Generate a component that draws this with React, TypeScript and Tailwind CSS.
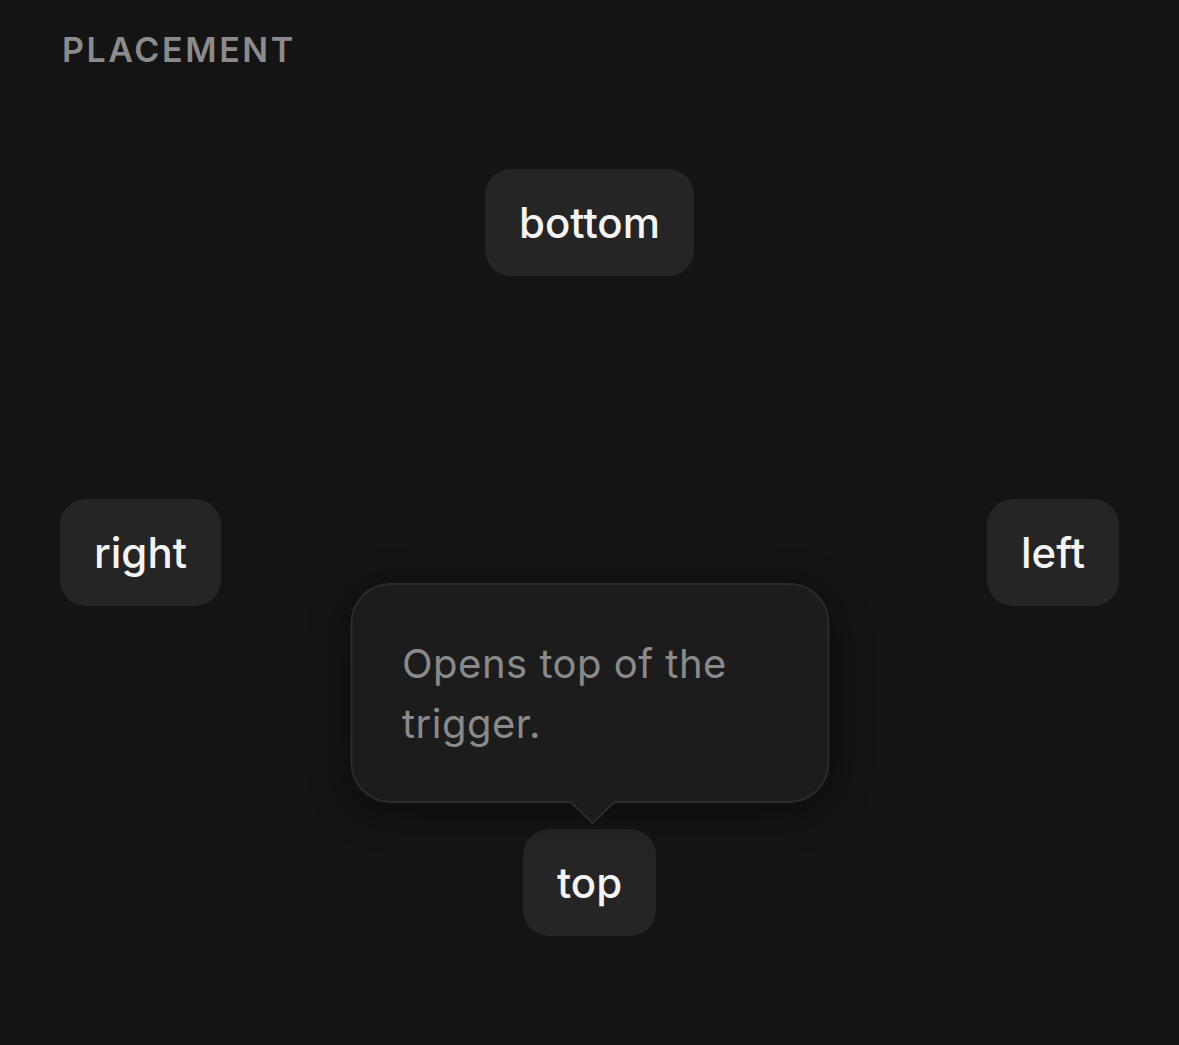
import type { ReactNode } from "react";

const Trigger = ({ children }: { children: ReactNode }) => (
  <button className="h-[107px] rounded-[26px] bg-[#252525] px-[34px] text-[42px] font-medium leading-none text-[#f4f4f4] tracking-[0px]">
    {children}
  </button>
);

export default function App() {
  return (
    <div
      className="min-h-[1045px] bg-[#141414] px-[60px] pt-[29px]"
      style={{ fontFamily: "Inter, 'Noto Sans', sans-serif" }}
    >
      <h2 className="pl-[2px] text-[34px] font-semibold leading-[42px] tracking-[2.6px] text-[#8b8b8b]">
        PLACEMENT
      </h2>

      <div className="mt-[98px] flex justify-center">
        <Trigger>bottom</Trigger>
      </div>

      <div className="mt-[223px] flex items-center justify-between">
        <Trigger>right</Trigger>
        <Trigger>left</Trigger>
      </div>

      <div className="mt-[223px] flex justify-center">
        <div className="relative">
          {/* tooltip above the trigger */}
          <div className="absolute bottom-[133px] left-1/2 w-[479px] -translate-x-1/2">
            <div className="relative rounded-[40px] border-2 border-[#2b2b2b] bg-[#1c1c1c] px-[50px] pt-[49px] pb-[47px] shadow-[0_8px_40px_rgba(0,0,0,0.45)]">
              <p className="text-[40px] leading-[60px] tracking-[0.5px] text-[#8a8a8a]">
                Opens top of the trigger.
              </p>
              <svg
                className="absolute -bottom-[24px] left-[217px]"
                width="46"
                height="25"
                viewBox="0 0 46 25"
              >
                <path d="M0 1 L23 23 L46 1" fill="#1c1c1c" stroke="#2b2b2b" strokeWidth="2" />
                <rect x="2" y="0" width="42" height="2" fill="#1c1c1c" />
              </svg>
            </div>
          </div>
          <Trigger>top</Trigger>
        </div>
      </div>
    </div>
  );
}
